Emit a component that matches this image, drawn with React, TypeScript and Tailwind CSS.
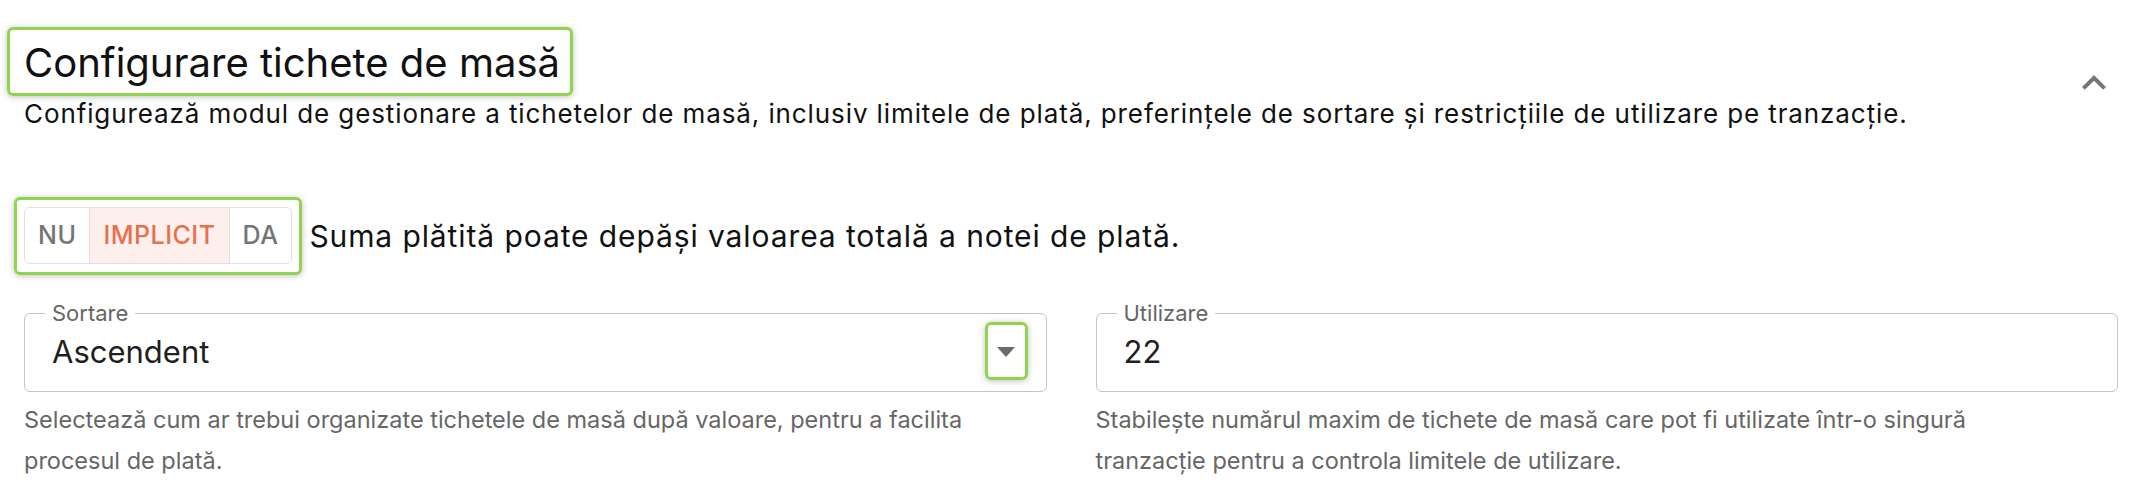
import * as React from 'react';

const Highlight: React.FC<{ className: string }> = ({ className }) => (
  <span className={`pointer-events-none absolute rounded-[6px] border-[3px] border-[#8fd34f] shadow-[0_1px_6px_rgba(0,0,0,0.25)] ${className}`} />
);

const ExpandLess = () => (
  <svg viewBox="0 0 24 24" className="w-12 h-12 fill-[#757575]">
    <path d="M12 8l-6 6 1.41 1.41L12 10.83l4.59 4.58L18 14z" />
  </svg>
);

const Field: React.FC<{ label: string; value: string; helper: string; select?: boolean }> = ({ label, value, helper, select }) => (
  <div>
    <fieldset className="m-0 min-w-0 border border-[#c4c4c4] rounded-[6px] pl-[20px] pr-[31px] pt-[10px] pb-[21px]">
      <legend className="px-[7px] text-[22px] leading-[22px] text-[#666666]">{label}</legend>
      <div className="flex items-center pl-[7px]">
        <span className="flex-1 text-[31px] leading-[36px] text-[#1f1f1f]">{value}</span>
        {select && (
          <span className="relative flex items-center justify-center">
            <Highlight className="-left-[12px] -right-[13px] -top-[25px] -bottom-[23px]" />
            <svg viewBox="0 0 18 10" className="w-[18px] h-[10px] fill-[#6b6b6b]">
              <path d="M0 0h18L9 10z" />
            </svg>
          </span>
        )}
      </div>
    </fieldset>
    <p className="mt-[7px] pr-[48px] text-[23.5px] leading-[41px] text-[#666666]">{helper}</p>
  </div>
);

export default function App() {
  const [mode, setMode] = React.useState('IMPLICIT');
  const options = ['NU', 'IMPLICIT', 'DA'];

  return (
    <div className="min-h-screen bg-white pl-6 pr-[25px] pt-[41px] font-['Inter',sans-serif] text-[#111111]">
      {/* Header */}
      <div className="flex items-start justify-between">
        <div>
          <h2 className="relative inline-block text-[40px] leading-[44px] font-normal text-[#111111]">
            <Highlight className="-left-[17px] -right-[13px] -top-[14px] -bottom-[11px]" />
            Configurare tichete de masă
          </h2>
          <p className="mt-[11px] text-[26px] leading-[36px] tracking-[0.9px]">
            Configurează modul de gestionare a tichetelor de masă, inclusiv limitele de plată, preferințele de sortare și restricțiile de utilizare pe tranzacție.
          </p>
        </div>
        <button className="mt-[18px]">
          <ExpandLess />
        </button>
      </div>

      {/* Toggle */}
      <div className="mt-[75px] flex items-center">
        <div className="relative">
          <Highlight className="-left-[10px] -right-[10px] -top-[10px] -bottom-[11px]" />
          <div className="flex h-[57px] rounded-[6px] border border-[#e0e0e0] overflow-hidden">
            {options.map((o, i) => (
              <button
                key={o}
                onClick={() => setMode(o)}
                className={`flex items-center px-[13px] text-[25px] font-medium tracking-[0.02em] ${i > 0 ? 'border-l border-[#e0e0e0]' : ''} ${mode === o ? 'bg-[#fdefeb] text-[#e8704e]' : 'bg-white text-[#757575]'}`}
              >
                {o}
              </button>
            ))}
          </div>
        </div>
        <span className="ml-[17px] text-[30px] leading-[36px] tracking-[0.9px]">Suma plătită poate depăși valoarea totală a notei de plată.</span>
      </div>

      {/* Fields */}
      <div className="mt-[38px] grid grid-cols-2 gap-[49px]">
        <Field
          label="Sortare"
          value="Ascendent"
          select
          helper="Selectează cum ar trebui organizate tichetele de masă după valoare, pentru a facilita procesul de plată."
        />
        <Field
          label="Utilizare"
          value="22"
          helper="Stabilește numărul maxim de tichete de masă care pot fi utilizate într-o singură tranzacție pentru a controla limitele de utilizare."
        />
      </div>
    </div>
  );
}
